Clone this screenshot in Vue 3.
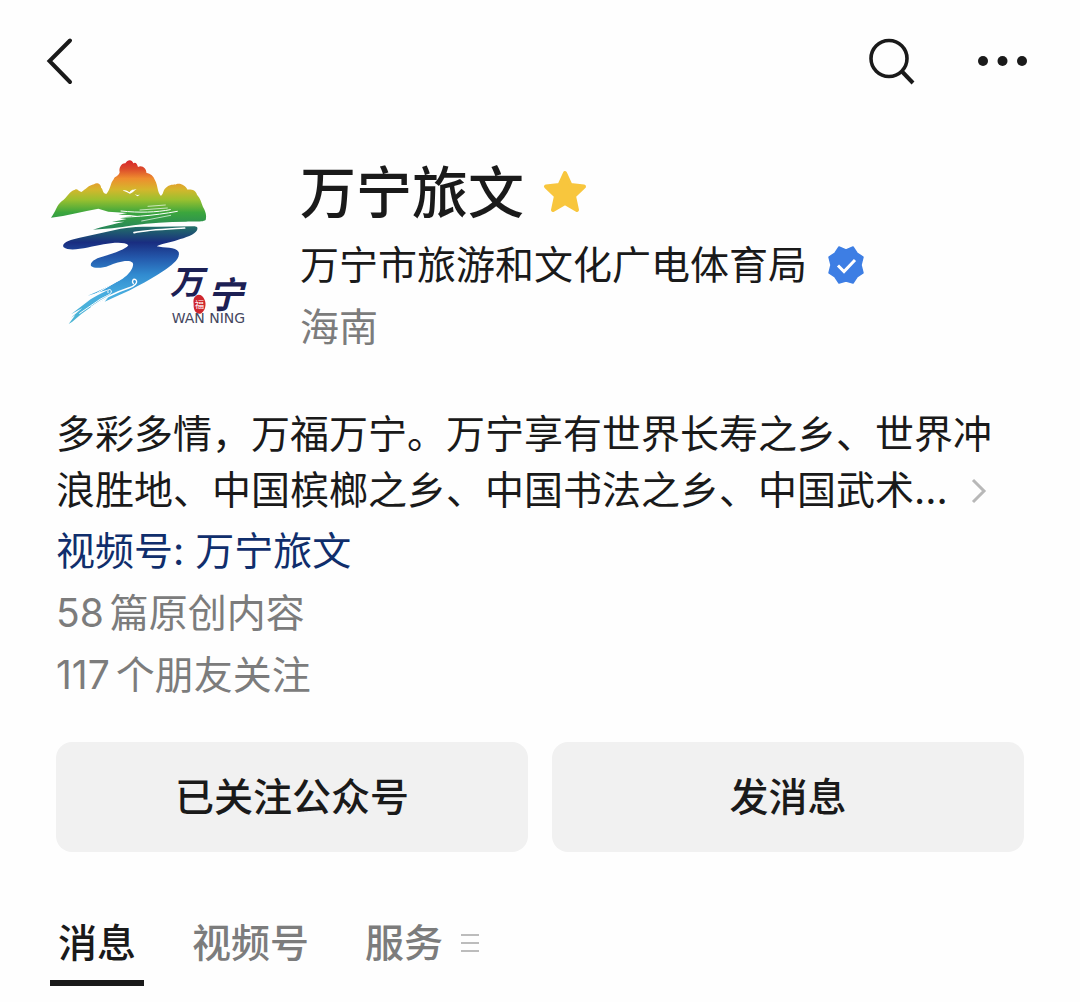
<template>
  <div class="account-page">
    <header class="top-bar">
      <button class="icon-button" aria-label="返回">
        <svg width="28" height="48" viewBox="0 0 28 48">
          <path d="M24 3.5 3.5 24 24 45" class="stroke" stroke-width="4" />
        </svg>
      </button>
      <div class="top-actions">
        <button class="icon-button" aria-label="搜索">
          <svg width="48" height="48" viewBox="0 0 48 48">
            <circle cx="21" cy="21.5" r="18" class="stroke" stroke-width="3.6" />
            <path d="M34 34.5 45 46" class="stroke butt" stroke-width="4" />
          </svg>
        </button>
        <button class="icon-button" aria-label="更多">
          <svg width="52" height="48" viewBox="0 0 52 48">
            <circle cx="7" cy="24" r="5" fill="#1a1a1a" />
            <circle cx="26.5" cy="24" r="5" fill="#1a1a1a" />
            <circle cx="46" cy="24" r="5" fill="#1a1a1a" />
          </svg>
        </button>
      </div>
    </header>

    <main class="content">
      <section class="profile">
        <!-- Account logo -->
        <svg class="avatar" viewBox="30 15 600 540" role="img" aria-label="万宁">
          <defs>
            <linearGradient id="hill" gradientUnits="userSpaceOnUse" x1="0" y1="35" x2="0" y2="240">
              <stop offset="0" stop-color="#d8262b" />
              <stop offset="0.12" stop-color="#dc4a2b" />
              <stop offset="0.26" stop-color="#ee8d2e" />
              <stop offset="0.42" stop-color="#d5b62c" />
              <stop offset="0.57" stop-color="#9bc02f" />
              <stop offset="0.76" stop-color="#3ba63d" />
              <stop offset="1" stop-color="#26865a" />
            </linearGradient>
            <linearGradient id="river" gradientUnits="userSpaceOnUse" x1="0" y1="230" x2="0" y2="525">
              <stop offset="0" stop-color="#237466" />
              <stop offset="0.17" stop-color="#192d80" />
              <stop offset="0.33" stop-color="#2459ac" />
              <stop offset="0.5" stop-color="#318bd0" />
              <stop offset="0.7" stop-color="#48addf" />
              <stop offset="1" stop-color="#4cb6d2" />
            </linearGradient>
          </defs>
          <path
            fill="url(#hill)"
            d="M33 206C47 190 49 169 65 157C80 148 87 126 105 122C112 118 116 128 124 129C136 122 147 108 162 106C170 98 184 105 183 116C190 118 185 132 199 135C213 119 210 104 221 91C225 80 235 84 239 70C236 57 244 42 256 43C263 31 276 31 280 43C286 37 292 45 294 54C306 47 320 59 319 71C332 74 341 81 345 94C354 109 351 128 362 140C371 137 368 124 377 117C389 104 401 109 410 105C424 102 436 111 443 122C456 121 467 124 471 137C482 149 484 161 489 174C496 186 501 199 497 213C488 220 459 217 438 218C382 218 330 222 281 229C235 237 195 240 159 242C190 231 228 224 253 218L215 219L260 210L240 208L271 201L292 199L235 197L262 192L205 188L175 179C129 187 81 200 33 206Z"
          />
          <path
            fill="url(#river)"
            d="M471 234C479 249 449 262 421 270C399 279 373 281 350 292C372 298 407 293 416 309C422 331 393 350 370 366C345 382 321 397 293 411C260 430 226 443 194 458L205 445C169 462 133 486 97 518L86 525L106 498L93 506L127 477L93 496L152 451L110 475L174 438L210 420L143 440C179 425 222 404 248 389C269 376 284 352 278 341C263 329 229 342 206 350C190 357 163 360 153 351C148 337 173 326 194 321C225 312 258 300 265 289C255 278 219 281 191 286C151 293 92 311 71 295C62 281 91 272 119 266C160 257 201 247 242 239C282 232 319 233 351 233L464 232Z"
          />
          <g fill="none" stroke="#fff" stroke-linecap="round">
            <path d="M282 251C325 242 386 240 434 237" stroke-width="5" />
            <path d="M198 204C260 207 342 200 412 187M243 186C298 192 350 190 391 182" stroke-width="3" />
            <path d="M300 183 382 177M324 172 376 168M305 216 392 199" stroke-width="2" />
            <path d="M280 404C274 396 280 388 287 392C296 400 283 412 266 417C229 429 191 447 154 474" stroke-width="4" />
            <path d="M204 431C201 421 211 418 214 426C216 437 193 442 177 453L119 493M239 392 160 439" stroke-width="3" />
          </g>
          <path fill="#fff" d="M248 125C257 121 263 126 269 130C273 122 280 122 290 121C281 125 277 134 269 134C262 130 257 127 248 125ZM284 135 291 138 300 137 292 142Z" />
          <g class="brush">
            <text x="390" y="434" font-size="100">万</text>
            <text x="502" y="476" font-size="108">宁</text>
          </g>
          <path fill="#cf272e" d="M468 440C478 433 489 441 493 451C501 466 495 489 481 494C466 496 460 481 461 466C459 453 461 445 468 440Z" />
          <text x="464" y="477" font-size="28" class="seal">福</text>
          <text x="395" y="523" font-size="42" class="latin">WAN NING</text>
        </svg>
        <div class="profile-text">
          <h1 class="name">
            万宁旅文
            <svg width="46" height="46" viewBox="0 0 46 46">
              <path
                d="M23 3 28.5 15 42 16.5 32 26 35 40 23 33 11 40 14 26 4 16.5 17.5 15Z"
                fill="#f8c63d"
                stroke="#f8c63d"
                stroke-width="4"
                stroke-linejoin="round"
              />
            </svg>
          </h1>
          <p class="owner">
            万宁市旅游和文化广电体育局
            <svg width="38" height="38" viewBox="0 0 38 38">
              <path
                d="M19 4 26 1 30 7 36 11 34 19 36 27 30 31 26 37 19 35 12 37 8 31 2 27 4 19 2 11 8 7 12 1Z"
                fill="#3d7ee4"
                stroke="#3d7ee4"
                stroke-width="1.5"
                stroke-linejoin="round"
              />
              <path d="M11 19.5 17 25.5 28 14" fill="none" stroke="#fff" stroke-width="3" />
            </svg>
          </p>
          <p class="region">海南</p>
        </div>
      </section>

      <section class="details">
        <p class="intro">
          多彩多情，万福万宁。万宁享有世界长寿之乡、世界冲浪胜地、中国槟榔之乡、中国书法之乡、中国武术...
          <svg class="chevron" width="16" height="26" viewBox="0 0 16 26">
            <path d="M2 2 13 13 2 24" fill="none" stroke="#b8b8b8" stroke-width="3" />
          </svg>
        </p>
        <a class="channel" href="#">视频号: 万宁旅文</a>
        <p class="stat"><span>58</span>篇原创内容</p>
        <p class="stat"><span>117</span>个朋友关注</p>
      </section>

      <div class="actions">
        <button class="action">已关注公众号</button>
        <button class="action">发消息</button>
      </div>

      <nav class="tabs">
        <button
          v-for="tab in tabs"
          :key="tab.name"
          class="tab"
          :class="{ active: tab.name === current }"
          @click="current = tab.name"
        >
          {{ tab.name }}
          <svg v-if="tab.menu" width="18" height="20" viewBox="0 0 18 20">
            <path d="M0 2H18M0 10H18M0 18H18" stroke="#bcbcbc" stroke-width="2" />
          </svg>
        </button>
      </nav>
    </main>
  </div>
</template>

<script setup>
import { ref } from "vue";

const tabs = [
  { name: "消息" },
  { name: "视频号" },
  { name: "服务", menu: true },
];

const current = ref("消息");
</script>

<style>
body {
  background: #fefefe;
}
</style>

<style scoped>
.account-page {
  font-family: Inter, "Noto Sans CJK SC", sans-serif;
  font-size: 39px;
  color: #1a1a1a;
}

h1,
p {
  margin: 0;
}

svg {
  flex: none;
}

button {
  padding: 0;
  border: none;
  background: none;
  font: inherit;
  color: inherit;
  cursor: pointer;
}

.top-bar {
  display: flex;
  justify-content: space-between;
  align-items: center;
  height: 122px;
  padding: 0 52px 0 46px;
}

.top-actions {
  display: flex;
  gap: 60px;
}

.icon-button {
  display: flex;
}

.stroke {
  fill: none;
  stroke: #1a1a1a;
  stroke-linecap: round;
}

.butt {
  stroke-linecap: butt;
}

.content {
  padding: 32px 56px 0;
}

.profile {
  display: flex;
  gap: 50px;
  margin-left: -6px;
}

.avatar {
  width: 200px;
  height: 180px;
}

.brush {
  font-family: "Noto Sans CJK SC", sans-serif;
  font-weight: 700;
  font-style: italic;
  fill: #1c2054;
}

.seal {
  font-family: "Noto Sans CJK SC", sans-serif;
  fill: #fff;
}

.latin {
  font-family: "DejaVu Sans", sans-serif;
  fill: #45465f;
}

.name,
.owner {
  display: flex;
  align-items: center;
}

.name {
  gap: 18px;
  font-size: 56px;
  font-weight: 500;
  line-height: 78px;
}

.owner {
  gap: 20px;
  line-height: 66px;
}

.region {
  line-height: 58px;
  color: #7c7c7c;
}

.details {
  margin-top: 50px;
  line-height: 62px;
}

.intro {
  line-height: 56px;
}

.chevron {
  margin-left: 12px;
}

.channel {
  display: block;
  margin-top: 2px;
  color: #102e6c;
  text-decoration: none;
}

.stat {
  color: #7c7c7c;
}

.stat span {
  margin-right: 6px;
}

.actions {
  display: grid;
  grid-template-columns: 1fr 1fr;
  gap: 24px;
  margin-top: 36px;
}

.action {
  height: 110px;
  padding-bottom: 6px;
  border-radius: 16px;
  background: #f1f1f1;
  font-weight: 500;
}

.tabs {
  display: flex;
  gap: 40px;
  margin: 53px 0 0 -6px;
}

.tab {
  display: flex;
  align-items: center;
  gap: 18px;
  padding: 0 8px;
  border-bottom: 6px solid transparent;
  font-weight: 500;
  line-height: 75px;
  color: #7c7c7c;
}

.tab.active {
  border-color: #1a1a1a;
  color: #1a1a1a;
}
</style>
